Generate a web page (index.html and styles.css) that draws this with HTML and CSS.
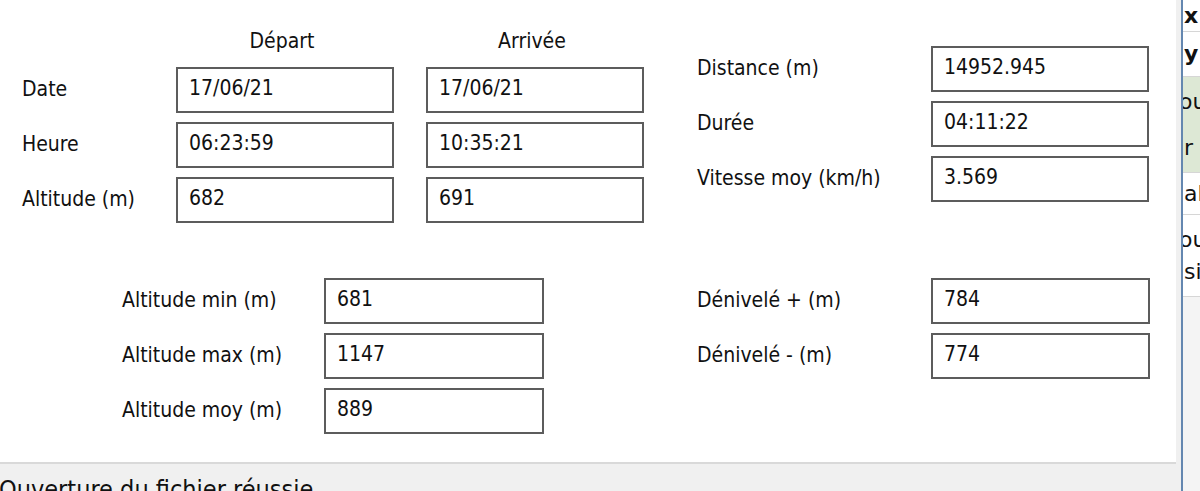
FILE: index.html
```html
<!DOCTYPE html>
<html lang="fr">
<head>
    <meta charset="UTF-8">
    <title>Trace - résumé</title>
    <link rel="stylesheet" href="styles.css">
</head>
<body>
    <div class="window">
        <div class="main-pane">
            <div class="form-panel">
                <div class="section">
                    <div class="field-grid trip-grid">
                        <div></div>
                        <div class="col-title">Départ</div>
                        <div class="col-title">Arrivée</div>

                        <div class="label">Date</div>
                        <div class="text-box">17/06/21</div>
                        <div class="text-box">17/06/21</div>

                        <div class="label">Heure</div>
                        <div class="text-box">06:23:59</div>
                        <div class="text-box">10:35:21</div>

                        <div class="label">Altitude (m)</div>
                        <div class="text-box">682</div>
                        <div class="text-box">691</div>
                    </div>

                    <div class="field-grid stats-grid">
                        <div class="label">Distance (m)</div>
                        <div class="text-box">14952.945</div>
                        <div class="label">Durée</div>
                        <div class="text-box">04:11:22</div>
                        <div class="label">Vitesse moy (km/h)</div>
                        <div class="text-box">3.569</div>
                    </div>
                </div>

                <div class="section section-bottom">
                    <div class="field-grid alt-grid">
                        <div class="label">Altitude min (m)</div>
                        <div class="text-box">681</div>
                        <div class="label">Altitude max (m)</div>
                        <div class="text-box">1147</div>
                        <div class="label">Altitude moy (m)</div>
                        <div class="text-box">889</div>
                    </div>

                    <div class="field-grid elev-grid">
                        <div class="label">Dénivelé + (m)</div>
                        <div class="text-box">784</div>
                        <div class="label">Dénivelé - (m)</div>
                        <div class="text-box">774</div>
                    </div>
                </div>
            </div>
            <div class="status-bar">Ouverture du fichier réussie</div>
        </div>

        <div class="splitter"></div>

        <div class="data-pane">
            <div class="data-row head">x</div>
            <div class="data-row head head-y">y</div>
            <div class="data-row selected">
                <span class="clipped">ou</span>
                <span>r</span>
            </div>
            <div class="data-row">al</div>
            <div class="data-row tall">
                <span class="clipped">ou</span>
                <span>si</span>
            </div>
        </div>
    </div>
</body>
</html>
```

FILE: styles.css
```css
* {
    box-sizing: border-box;
    margin: 0;
    padding: 0;
}

body {
    font-family: "DejaVu Sans Condensed", "Liberation Sans", sans-serif;
    background-color: #f0f0f0;
    color: #111;
    overflow: hidden;
}

.window {
    display: flex;
    width: 1200px;
    height: 491px;
    overflow: hidden;
}

.main-pane {
    width: 1181px;
    display: flex;
    flex-direction: column;
    background-color: #f0f0f0;
    overflow: hidden;
}

.form-panel {
    flex-shrink: 0;
    width: 1176px;
    height: 464px;
    background-color: #fff;
    border-bottom: 2px solid #d9d9d9;
}

.section {
    display: flex;
    align-items: flex-start;
}

.section-bottom {
    margin-top: 55px;
}

.field-grid {
    display: grid;
    grid-auto-rows: 46px;
    row-gap: 9px;
    align-items: center;
    font-size: 21px;
}

.trip-grid {
    grid-template-columns: 122px 218px 218px;
    grid-template-rows: 34px;
    column-gap: 32px;
    margin: 24px 0 0 22px;
}

.stats-grid {
    grid-template-columns: 234px 218px;
    margin: 46px 0 0 53px;
}

.alt-grid {
    grid-template-columns: 202px 220px;
    margin-left: 122px;
}

.elev-grid {
    grid-template-columns: 234px 219px;
    margin-left: 153px;
}

.col-title {
    text-align: center;
    padding-right: 6px;
}

.label {
    white-space: nowrap;
    padding-bottom: 2px;
}

.text-box {
    height: 46px;
    border: 2px solid #5c5c5c;
    padding: 0 0 4px 11px;
    display: flex;
    align-items: center;
    background-color: #fff;
}

.status-bar {
    flex-shrink: 0;
    font-size: 25px;
    line-height: 30px;
    padding-top: 11px;
    text-indent: -1px;
    white-space: nowrap;
}

.splitter {
    width: 2px;
    background-color: #6487b0;
}

.data-pane {
    flex: 1;
    background-color: #f4f4f4;
    overflow: hidden;
    font-family: "DejaVu Sans", "Liberation Sans", sans-serif;
    font-size: 22px;
}

.data-row {
    display: flex;
    flex-direction: column;
    justify-content: center;
    background-color: #fff;
    border-bottom: 1px solid #d6d6d6;
    padding-left: 1px;
    height: 42px;
    line-height: 32px;
    white-space: nowrap;
}

.head {
    font-weight: bold;
    height: 32px;
    line-height: 26px;
}

.head-y {
    height: 45px;
}

.selected {
    background-color: #dde8d5;
    height: 96px;
    line-height: 46px;
}

.tall {
    height: 82px;
}

.clipped {
    margin-left: -5px;
}
```
